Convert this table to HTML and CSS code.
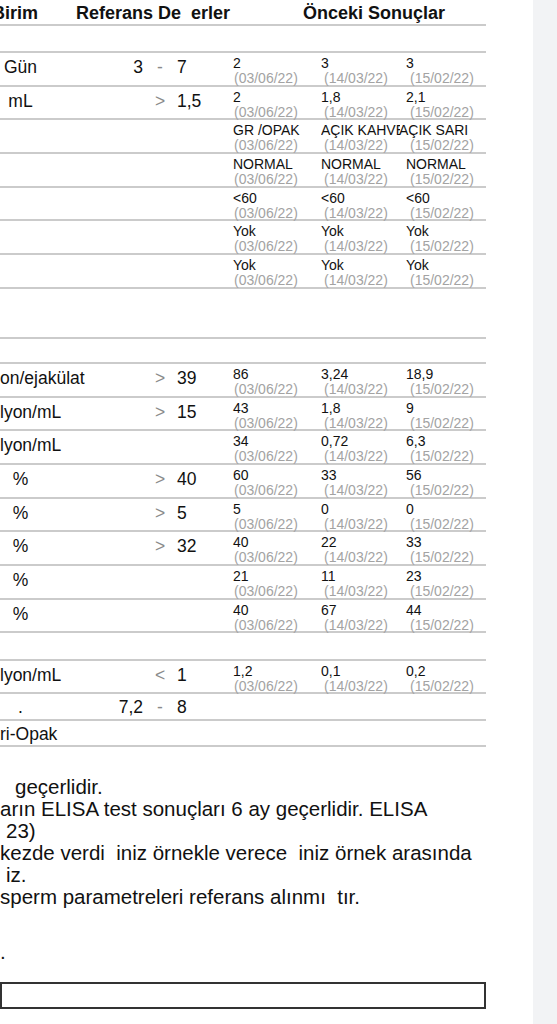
FILE: index.html
```html
<!DOCTYPE html>
<html lang="tr">
<head>
<meta charset="utf-8">
<title>Sonuçlar</title>
<link rel="stylesheet" href="styles.css">
</head>
<body>
<div class="page">
  <div class="sheet">
    <div class="row head">
      <div class="unit"><span class="birim">Birim</span></div>
      <div class="ref-head">Referans De  erler</div>
      <div class="prev-head">Önceki Sonuçlar</div>
    </div>
    <div class="row blank b27"></div>

    <div class="row">
      <div class="unit">Gün</div>
      <div class="lo">3</div><div class="sep">-</div><div class="hi">7</div>
      <div class="prev p1"><span class="v">2</span><span class="d">(03/06/22)</span></div>
      <div class="prev p2"><span class="v">3</span><span class="d">(14/03/22)</span></div>
      <div class="prev p3"><span class="v">3</span><span class="d">(15/02/22)</span></div>
    </div>
    <div class="row">
      <div class="unit">mL</div>
      <div class="lo"></div><div class="sep">&gt;</div><div class="hi">1,5</div>
      <div class="prev p1"><span class="v">2</span><span class="d">(03/06/22)</span></div>
      <div class="prev p2"><span class="v">1,8</span><span class="d">(14/03/22)</span></div>
      <div class="prev p3"><span class="v">2,1</span><span class="d">(15/02/22)</span></div>
    </div>
    <div class="row">
      <div class="unit"></div>
      <div class="lo"></div><div class="sep"></div><div class="hi"></div>
      <div class="prev p1"><span class="v">GR /OPAK</span><span class="d">(03/06/22)</span></div>
      <div class="prev p2"><span class="v clip">AÇIK KAHVE</span><span class="d">(14/03/22)</span></div>
      <div class="prev p3"><span class="v pull">AÇIK SARI</span><span class="d">(15/02/22)</span></div>
    </div>
    <div class="row">
      <div class="unit"></div>
      <div class="lo"></div><div class="sep"></div><div class="hi"></div>
      <div class="prev p1"><span class="v">NORMAL</span><span class="d">(03/06/22)</span></div>
      <div class="prev p2"><span class="v">NORMAL</span><span class="d">(14/03/22)</span></div>
      <div class="prev p3"><span class="v">NORMAL</span><span class="d">(15/02/22)</span></div>
    </div>
    <div class="row">
      <div class="unit"></div>
      <div class="lo"></div><div class="sep"></div><div class="hi"></div>
      <div class="prev p1"><span class="v">&lt;60</span><span class="d">(03/06/22)</span></div>
      <div class="prev p2"><span class="v">&lt;60</span><span class="d">(14/03/22)</span></div>
      <div class="prev p3"><span class="v">&lt;60</span><span class="d">(15/02/22)</span></div>
    </div>
    <div class="row">
      <div class="unit"></div>
      <div class="lo"></div><div class="sep"></div><div class="hi"></div>
      <div class="prev p1"><span class="v">Yok</span><span class="d">(03/06/22)</span></div>
      <div class="prev p2"><span class="v">Yok</span><span class="d">(14/03/22)</span></div>
      <div class="prev p3"><span class="v">Yok</span><span class="d">(15/02/22)</span></div>
    </div>
    <div class="row">
      <div class="unit"></div>
      <div class="lo"></div><div class="sep"></div><div class="hi"></div>
      <div class="prev p1"><span class="v">Yok</span><span class="d">(03/06/22)</span></div>
      <div class="prev p2"><span class="v">Yok</span><span class="d">(14/03/22)</span></div>
      <div class="prev p3"><span class="v">Yok</span><span class="d">(15/02/22)</span></div>
    </div>

    <div class="row blank b50"></div>
    <div class="row blank b25"></div>

    <div class="row">
      <div class="unit cut">on/ejakülat</div>
      <div class="lo"></div><div class="sep">&gt;</div><div class="hi">39</div>
      <div class="prev p1"><span class="v">86</span><span class="d">(03/06/22)</span></div>
      <div class="prev p2"><span class="v">3,24</span><span class="d">(14/03/22)</span></div>
      <div class="prev p3"><span class="v">18,9</span><span class="d">(15/02/22)</span></div>
    </div>
    <div class="row">
      <div class="unit cut">lyon/mL</div>
      <div class="lo"></div><div class="sep">&gt;</div><div class="hi">15</div>
      <div class="prev p1"><span class="v">43</span><span class="d">(03/06/22)</span></div>
      <div class="prev p2"><span class="v">1,8</span><span class="d">(14/03/22)</span></div>
      <div class="prev p3"><span class="v">9</span><span class="d">(15/02/22)</span></div>
    </div>
    <div class="row">
      <div class="unit cut">lyon/mL</div>
      <div class="lo"></div><div class="sep"></div><div class="hi"></div>
      <div class="prev p1"><span class="v">34</span><span class="d">(03/06/22)</span></div>
      <div class="prev p2"><span class="v">0,72</span><span class="d">(14/03/22)</span></div>
      <div class="prev p3"><span class="v">6,3</span><span class="d">(15/02/22)</span></div>
    </div>
    <div class="row">
      <div class="unit">%</div>
      <div class="lo"></div><div class="sep">&gt;</div><div class="hi">40</div>
      <div class="prev p1"><span class="v">60</span><span class="d">(03/06/22)</span></div>
      <div class="prev p2"><span class="v">33</span><span class="d">(14/03/22)</span></div>
      <div class="prev p3"><span class="v">56</span><span class="d">(15/02/22)</span></div>
    </div>
    <div class="row">
      <div class="unit">%</div>
      <div class="lo"></div><div class="sep">&gt;</div><div class="hi">5</div>
      <div class="prev p1"><span class="v">5</span><span class="d">(03/06/22)</span></div>
      <div class="prev p2"><span class="v">0</span><span class="d">(14/03/22)</span></div>
      <div class="prev p3"><span class="v">0</span><span class="d">(15/02/22)</span></div>
    </div>
    <div class="row">
      <div class="unit">%</div>
      <div class="lo"></div><div class="sep">&gt;</div><div class="hi">32</div>
      <div class="prev p1"><span class="v">40</span><span class="d">(03/06/22)</span></div>
      <div class="prev p2"><span class="v">22</span><span class="d">(14/03/22)</span></div>
      <div class="prev p3"><span class="v">33</span><span class="d">(15/02/22)</span></div>
    </div>
    <div class="row">
      <div class="unit">%</div>
      <div class="lo"></div><div class="sep"></div><div class="hi"></div>
      <div class="prev p1"><span class="v">21</span><span class="d">(03/06/22)</span></div>
      <div class="prev p2"><span class="v">11</span><span class="d">(14/03/22)</span></div>
      <div class="prev p3"><span class="v">23</span><span class="d">(15/02/22)</span></div>
    </div>
    <div class="row">
      <div class="unit">%</div>
      <div class="lo"></div><div class="sep"></div><div class="hi"></div>
      <div class="prev p1"><span class="v">40</span><span class="d">(03/06/22)</span></div>
      <div class="prev p2"><span class="v">67</span><span class="d">(14/03/22)</span></div>
      <div class="prev p3"><span class="v">44</span><span class="d">(15/02/22)</span></div>
    </div>

    <div class="row blank b28"></div>

    <div class="row r33">
      <div class="unit cut">lyon/mL</div>
      <div class="lo"></div><div class="sep">&lt;</div><div class="hi">1</div>
      <div class="prev p1"><span class="v">1,2</span><span class="d">(03/06/22)</span></div>
      <div class="prev p2"><span class="v">0,1</span><span class="d">(14/03/22)</span></div>
      <div class="prev p3"><span class="v">0,2</span><span class="d">(15/02/22)</span></div>
    </div>
    <div class="row r27">
      <div class="unit">.</div>
      <div class="lo">7,2</div><div class="sep">-</div><div class="hi">8</div>
    </div>
    <div class="row r26">
      <div class="unit cut">ri-Opak</div>
    </div>
  </div>

  <div class="notes">
    <p class="l1">geçerlidir.</p>
    <p>arın ELISA test sonuçları 6 ay geçerlidir. ELISA</p>
    <p class="l3">23)</p>
    <p>kezde verdi  iniz örnekle verece  iniz örnek arasında</p>
    <p class="l3">iz.</p>
    <p>sperm parametreleri referans alınmı  tır.</p>
    <p class="dot">.</p>
  </div>
  <div class="box"></div>
</div>
<div class="side"></div>
</body>
</html>
```

FILE: styles.css
```css
html, body {
  margin: 0;
  padding: 0;
  background: #ffffff;
}

body {
  display: flex;
  width: 557px;
  height: 1024px;
  overflow: hidden;
  font-family: "Liberation Sans", Arial, sans-serif;
  color: #111111;
}

.page {
  flex: none;
  width: 533px;
  background: #ffffff;
}

.side {
  flex: 1;
  background: #f2f3f5;
}

.sheet {
  width: 486px;
}

.row {
  display: grid;
  grid-template-columns: 41px 102px 34px 56px 88px 85px 80px;
  align-items: start;
  box-sizing: border-box;
  height: 33.7px;
  border-bottom: 2px solid #cbcbcb;
  font-size: 17.5px;
  line-height: 20px;
}

.row.head {
  height: 26px;
  font-size: 18px;
  font-weight: bold;
}

.birim {
  margin-left: -8px;
}

.head .unit {
  justify-content: flex-start;
  padding-top: 3px;
}

.ref-head {
  grid-column: 2 / 5;
  padding-left: 35px;
  padding-top: 3px;
  white-space: pre;
}

.prev-head {
  grid-column: 5 / 8;
  padding-left: 70px;
  padding-top: 3px;
  white-space: nowrap;
}

.row.blank.b27 { height: 27px; }
.row.blank.b50 { height: 50px; }
.row.blank.b25 { height: 25px; }
.row.blank.b28 { height: 28px; }
.row.r33 { height: 33px; }
.row.r27 { height: 27px; }
.row.r26 { height: 26px; }

.unit {
  display: flex;
  justify-content: center;
  padding-top: 4px;
  white-space: nowrap;
}

.unit.cut {
  justify-content: flex-start;
}

.lo {
  text-align: right;
  padding-top: 4px;
}

.sep {
  text-align: center;
  padding-top: 4px;
  color: #8a8a8a;
}

.hi {
  text-align: left;
  padding-top: 4px;
}

.r27 .unit, .r27 .lo, .r27 .sep, .r27 .hi,
.r26 .unit {
  padding-top: 3px;
}

.prev {
  display: flex;
  flex-direction: column;
  padding-top: 3px;
  font-size: 14px;
  line-height: 15px;
  white-space: nowrap;
}

.prev .v {
  color: #111111;
}

.prev .d {
  color: #a3a3a3;
}

.p1 .d { padding-left: 1px; }
.p2 .d { padding-left: 3px; }
.p3 .d { padding-left: 4px; }

.v.clip {
  display: block;
  width: 79px;
  overflow: hidden;
}

.v.pull {
  margin-left: -7px;
}

.notes {
  padding-top: 29px;
  font-size: 20.5px;
  line-height: 22px;
}

.notes p {
  margin: 0;
  white-space: pre;
}

.notes .l1 {
  padding-left: 15px;
}

.notes .l3 {
  padding-left: 6px;
}

.notes .dot {
  margin-top: 33px;
}

.box {
  width: 486px;
  height: 27px;
  box-sizing: border-box;
  margin-top: 19px;
  border: 2px solid #333333;
}
```
